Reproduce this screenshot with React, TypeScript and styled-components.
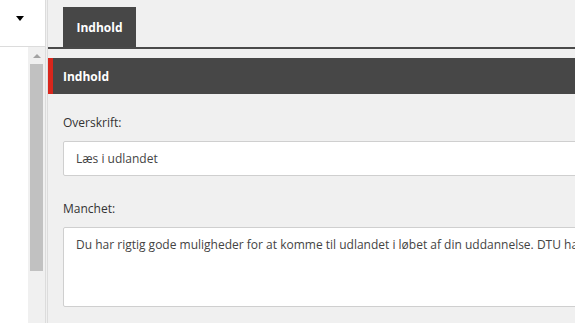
import React from "react";
import styled, { createGlobalStyle } from "styled-components";

const GlobalStyle = createGlobalStyle`
  html, body {
    margin: 0;
    padding: 0;
    overflow: hidden;
  }
  body {
    font-family: "Open Sans", "Liberation Sans", sans-serif;
    background: #f0f0f0;
  }
`;

const Page = styled.div`
  display: flex;
  width: 575px;
  height: 323px;
  overflow: hidden;
`;

const Sidebar = styled.div`
  width: 45px;
  flex-shrink: 0;
  display: flex;
  flex-direction: column;
  background: #fff;
  border-right: 1px solid #dcdcdc;
`;

const SideTop = styled.div`
  height: 47px;
  border-bottom: 1px solid #dcdcdc;
  display: flex;
  align-items: flex-start;
  justify-content: center;
  padding-top: 16px;
  box-sizing: border-box;
`;

const Caret = styled.span`
  width: 0;
  height: 0;
  border-left: 4px solid transparent;
  border-right: 4px solid transparent;
  border-top: 5px solid #000;
  margin-left: -5px;
`;

const SideBody = styled.div`
  flex: 1;
  display: flex;
  justify-content: flex-end;
`;

const Track = styled.div`
  width: 17px;
  background: #f0f0f0;
  display: flex;
  flex-direction: column;
  align-items: center;
`;

const ArrowUp = styled.span`
  margin-top: 7px;
  width: 0;
  height: 0;
  border-left: 4px solid transparent;
  border-right: 4px solid transparent;
  border-bottom: 4px solid #a3a3a3;
`;

const Thumb = styled.div`
  margin-top: 6px;
  width: 13px;
  height: 207px;
  background: #c1c1c1;
`;

const Main = styled.div`
  flex: 1;
  min-width: 0;
  background: #f0f0f0;
  border-left: 1px solid #dcdcdc;
  margin-left: 1px;
`;

const TabBar = styled.div`
  padding: 7px 0 0 15px;
  border-bottom: 2px solid #4a4a4a;
  display: flex;
`;

const Tab = styled.div`
  width: 73px;
  height: 40px;
  background: #474747;
  color: #fff;
  font-weight: 700;
  font-size: 12px;
  display: flex;
  align-items: center;
  justify-content: center;
`;

const SectionHeader = styled.div`
  margin-top: 9px;
  height: 36px;
  background: #474747;
  border-left: 5px solid #d9261c;
  padding-left: 10px;
  display: flex;
  align-items: center;
  color: #fff;
  font-weight: 700;
  font-size: 12px;
`;

const Form = styled.div`
  padding: 20px 0 0 15px;
  width: 620px;
`;

const Field = styled.div`
  margin-bottom: 24px;
`;

const Label = styled.div`
  font-size: 12px;
  color: #333;
  height: 17px;
  line-height: 17px;
  margin-bottom: 10px;
`;

const Input = styled.div<{ $tall?: boolean }>`
  background: #fff;
  border: 1px solid #cfcfcf;
  border-radius: 2px;
  height: ${(p) => (p.$tall ? "80px" : "35px")};
  box-sizing: border-box;
  padding: ${(p) => (p.$tall ? "8px 12px" : "0 12px")};
  display: flex;
  align-items: ${(p) => (p.$tall ? "flex-start" : "center")};
  font-size: 12px;
  color: #444;
  white-space: nowrap;
`;

export default function App() {
  return (
    <Page>
      <GlobalStyle />
      <Sidebar>
        <SideTop>
          <Caret />
        </SideTop>
        <SideBody>
          <Track>
            <ArrowUp />
            <Thumb />
          </Track>
        </SideBody>
      </Sidebar>
      <Main>
        <TabBar>
          <Tab>Indhold</Tab>
        </TabBar>
        <SectionHeader>Indhold</SectionHeader>
        <Form>
          <Field>
            <Label>Overskrift:</Label>
            <Input>Læs i udlandet</Input>
          </Field>
          <Field>
            <Label>Manchet:</Label>
            <Input $tall>
              Du har rigtig gode muligheder for at komme til udlandet i løbet af din uddannelse. DTU har aftaler med universiteter
            </Input>
          </Field>
        </Form>
      </Main>
    </Page>
  );
}
